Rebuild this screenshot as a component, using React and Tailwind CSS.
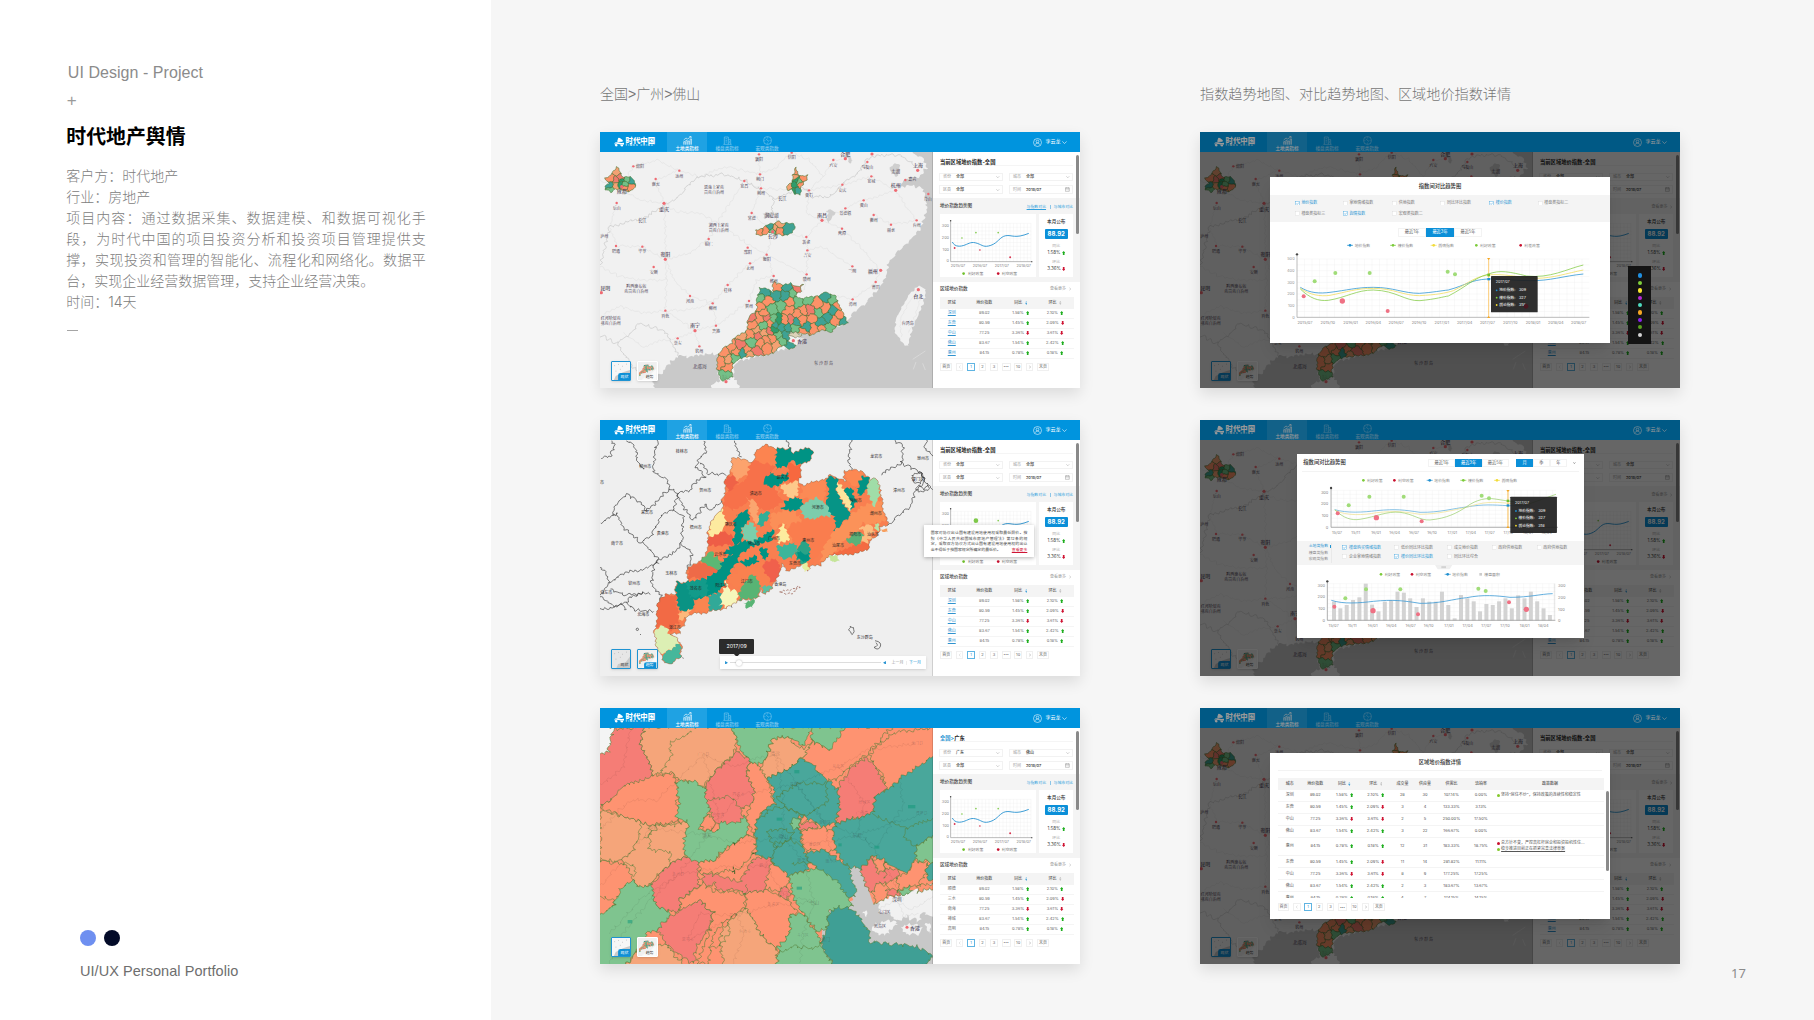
import React from "react";

/* ---------- geometry helpers ---------- */

const warp = ([x, y], a) => [
  x + a * (Math.sin(y * 0.42 + x * 0.11) + 0.7 * Math.sin(y * 0.19 - x * 0.31 + 1.3)),
  y + a * (Math.sin(x * 0.39 - y * 0.13 + 0.6) + 0.7 * Math.sin(x * 0.17 + y * 0.29)),
];

const parse = (s) => s.trim().split(/\s+/).map((p) => p.split(",").map(Number));

function rough(points, a = 2, closed = true) {
  const out = [];
  const n = points.length;
  for (let i = 0; i < (closed ? n : n - 1); i++) {
    const p = points[i];
    const q = points[(i + 1) % n];
    const k = Math.max(1, Math.round(Math.hypot(q[0] - p[0], q[1] - p[1]) / 4));
    for (let j = 0; j < k; j++) {
      out.push(warp([p[0] + ((q[0] - p[0]) * j) / k, p[1] + ((q[1] - p[1]) * j) / k], a));
    }
  }
  if (!closed) out.push(warp(points[n - 1], a));
  return "M" + out.map((p) => p[0].toFixed(1) + " " + p[1].toFixed(1)).join("L") + (closed ? "Z" : "");
}

function cell(seeds, i, box) {
  let poly = [[box[0], box[1]], [box[2], box[1]], [box[2], box[3]], [box[0], box[3]]];
  const a = seeds[i];
  seeds.forEach((b, j) => {
    if (j === i || !poly.length) return;
    const mx = (a[0] + b[0]) / 2;
    const my = (a[1] + b[1]) / 2;
    const d = (p) => (p[0] - mx) * (b[0] - a[0]) + (p[1] - my) * (b[1] - a[1]);
    const next = [];
    poly.forEach((p, k) => {
      const q = poly[(k + 1) % poly.length];
      const dp = d(p);
      const dq = d(q);
      if (dp <= 0) next.push(p);
      if (dp < 0 !== dq < 0) {
        const t = dp / (dp - dq);
        next.push([p[0] + (q[0] - p[0]) * t, p[1] + (q[1] - p[1]) * t]);
      }
    });
    poly = next;
  });
  return poly;
}

const TONE = { o: "#fc9168", l: "#f3a173", r: "#f07a6c", g: "#74c088", t: "#3fa294", d: "#2f9c6c" };

function Cells({ id, outline, seeds, amp = 2 }) {
  const pts = parse(outline);
  const xs = pts.map((p) => p[0]);
  const ys = pts.map((p) => p[1]);
  const box = [Math.min(...xs) - 8, Math.min(...ys) - 8, Math.max(...xs) + 8, Math.max(...ys) + 8];
  const list = seeds.trim().split(/\s+/).map((s) => {
    const [x, y, c] = s.split(",");
    return [Number(x), Number(y), c];
  });
  const edge = rough(pts, amp);
  return (
    <g>
      <clipPath id={id}>
        <path d={edge} />
      </clipPath>
      <g clipPath={`url(#${id})`} stroke="#3d6b2a" strokeWidth="1.5">
        {list.map((s, i) => (
          <path key={i} d={rough(cell(list, i, box), amp)} fill={TONE[s[2]]} />
        ))}
      </g>
      <path d={edge} fill="none" stroke="#4a7434" strokeWidth="1.7" />
    </g>
  );
}

/* ---------- maps ---------- */

const GD_OUTLINE =
  "550,606 575,615 600,608 620,620 638,615 630,635 612,650 640,655 690,645 700,637 735,645 755,690 772,730 740,735 725,755 690,750 665,765 640,760 620,758 600,755 595,785 620,795 600,808 575,795 550,820 500,828 470,830 445,840 430,850 425,870 430,890 395,902 388,880 380,865 385,820 400,805 425,790 435,770 470,755 475,715 500,690 500,660 510,625 535,625 548,640";
const GD_SEEDS =
  "522,636,t 512,656,g 562,620,o 560,645,t 590,622,t 608,640,g 624,624,r 585,645,t 532,665,o 512,680,o 545,688,g 575,680,g 600,665,o 596,692,o 625,665,g 655,660,g 640,690,o 622,705,o 660,690,r 682,670,o 686,700,g 708,650,t 708,685,o 730,660,g 728,690,t 745,675,o 748,705,o 762,726,t 735,722,o 718,745,g 712,712,t 695,745,o 692,728,t 668,715,o 672,745,o 650,740,t 635,720,o 640,758,o 618,725,t 604,718,r 612,745,g 595,745,t 584,720,o 572,740,t 566,722,d 556,735,t 548,718,g 540,730,o 530,715,r 520,738,g 522,700,o 508,715,o 485,712,r 490,738,o 500,750,l 480,762,o 455,765,l 505,768,r 525,758,l 540,755,r 552,750,d 565,765,g 545,775,o 575,780,g 590,765,t 605,798,t 560,795,l 530,800,o 530,780,o 512,790,o 498,812,r 485,788,g 470,808,o 480,825,l 450,795,r 457,820,t 440,815,o 435,835,g 425,800,o 400,815,o 395,845,o 415,840,l 415,860,o 410,888,g";

const CITIES =
  "绵阳,130,259,150,260 南充,197,297,197,314 达州,268,272,268,289 襄阳,507,223,507,240 信阳,605,218,605,234 六安,730,240,730,256 马鞍山,832,246,832,262 宜城,844,289,844,306 宜昌,463,303,463,320 荆门,510,283,510,299 荆州,513,325,513,341 黄石,657,331,657,348 安庆,757,314,757,331 嘉兴,946,300,967,300 舟山,1015,342,1013,358 乐山,80,369,80,385 常德,485,399,485,416 景德镇,766,385,766,402 衢州,851,405,851,422 台州,980,421,980,437 丽水,903,434,903,451 黄山,821,361,821,377 鹰潭,756,446,756,462 新余,649,471,649,487 吉安,652,511,652,527 铜仁,356,477,356,493 邵阳,473,503,473,519 衡阳,530,524,530,540 昭通,78,498,78,515 毕节,157,500,157,516 安顺,191,561,191,577 永州,480,550,480,566 三明,787,559,787,575 莆田,857,606,857,623 漳州,788,658,788,674 桂林,413,615,413,631 郴州,551,588,551,604 赣州,650,583,650,599 贺州,477,663,477,680 河池,300,648,300,665 柳州,368,670,368,687 百色,226,692,226,709 贵港,378,737,378,754 崇左,263,775,263,792 钦州,328,799,328,816";
const BIG =
  "重庆,222,370,222,389 长沙,548,455,548,468 南昌,696,421,696,407 福州,872,571,848,573 贵阳,226,538,226,523 南宁,315,752,315,737 上海,983,271,984,257 杭州,917,331,917,315 合肥,766,236,766,224 香港,610,782,636,785 台北,985,629,985,648 成都,95,320,95,333 昆明,34,638,46,624";

const cityList = (s) => s.split(" ").map((c) => c.split(","));

function ChinaMap() {
  return (
    <svg viewBox="30 216 999 708" className="block h-full w-full" fontFamily="'Noto Serif CJK SC','Noto Sans CJK SC',serif">
      <rect x="30" y="216" width="999" height="708" fill="#f1f1f1" />
      <g fill="none" stroke="#dfdfdf" strokeWidth="1.6">
        {[
          "30,300 90,325 150,360 222,370 260,395 330,400 400,440 470,490 530,524 600,560 650,583",
          "95,320 130,259 200,240 268,272 330,290 410,260 510,283 513,325 485,399 548,455",
          "222,370 197,297 268,272",
          "222,370 226,440 226,538 157,500 78,498 60,440 80,369",
          "226,538 300,520 356,477 400,400 463,303 513,325 600,330 657,331 757,314 844,289 917,331",
          "226,538 230,600 226,692 315,752 328,799 340,825",
          "226,538 260,610 300,648 368,670 413,615 480,550 530,524 548,455",
          "315,752 378,737 430,700 477,663 500,600 551,588 530,524",
          "696,421 649,471 652,511 650,583 640,640",
          "696,421 766,385 821,361 917,331 980,421 903,434 851,405",
          "696,421 756,446 810,500 872,571 857,606 788,658 700,640",
          "787,559 740,530 700,500 652,511",
          "766,236 730,240 700,290 657,331 650,400 696,421",
          "40,700 90,680 160,700 226,692 290,690 368,670 378,737",
          "30,560 90,590 150,600 230,600",
          "100,760 160,800 220,780 263,775 315,752",
          "548,455 590,460 649,471",
          "507,223 510,283 560,260 605,216 660,240 700,290",
        ].map((p) => (
          <path key={p} d={rough(parse(p), 2.5, false)} />
        ))}
      </g>
      <g fill="none" stroke="#cbcbcb" strokeWidth="2.2">
        <path d={rough(parse("30,560 45,500 60,440 110,425 160,415 222,375 270,345 320,290 400,283 463,300 513,330 550,355 600,340 640,320 665,350 720,350 760,310 800,285 832,240 870,225 930,225 985,262"), 3, false)} />
        <path d={rough(parse("550,355 545,400 570,430"), 3, false)} />
        <path d={rough(parse("30,765 80,790 110,770 150,730 200,745 230,760 265,825"), 3, false)} />
        <path d={rough(parse("80,790 120,850 150,880 210,923"), 3, false)} />
      </g>
      <g fill="#cfcfcf">
        <path d={rough(parse("905,255 925,250 930,275 915,290 902,275"), 3)} />
        <path d={rough(parse("710,388 735,395 725,415 715,430"), 3)} />
        <path d={rough(parse("520,400 550,396 545,412 525,414"), 2)} />
        <path d={rough(parse("768,222 790,240 778,250"), 2)} />
      </g>
      <path
        d={rough(parse("1050,200 955,210 1000,238 1010,262 990,290 950,296 925,322 960,316 1000,325 1006,350 1012,385 1000,420 990,452 962,478 932,508 915,525 895,545 890,585 872,620 850,645 828,668 800,690 775,718 740,740 640,760 620,795 560,815 500,830 445,842 432,860 430,890 440,905 448,935 360,935 370,908 388,902 384,860 390,824 350,820 305,832 265,826 240,850 212,880 188,905 196,935 1050,935"), 3)}
        fill="#c9c9c9"
      />
      <path d={rough(parse("368,912 400,904 435,905 450,918 450,940 355,940"), 2)} fill="#f1f1f1" />
      <path d={rough(parse("985,616 1008,628 1003,660 986,702 966,748 953,800 935,785 915,755 917,720 935,682 960,640"), 2)} fill="#f1f1f1" />
      <g fill="none" stroke="#dedede" strokeWidth="1.5">
        <path d={rough(parse("985,630 955,670 930,720 935,770"), 2, false)} />
        <path d={rough(parse("990,660 975,710 955,760"), 2, false)} />
      </g>
      <g stroke="#e5e5e5" strokeWidth="1.6">
        <path d="M968 838L1006 813M970 868L978 846M998 850L1006 870" />
      </g>
      <Cells id="gd" outline={GD_OUTLINE} seeds={GD_SEEDS} />
      <path d={rough(parse("592,762 612,756 634,764 625,772 604,770"), 2)} fill="#dcd3b8" stroke="#4a5a34" strokeWidth="1.4" />
      <path d={rough(parse("598,776 622,772 640,776 622,786 600,786"), 2)} fill="#f1f1f1" />
      <Cells
        id="cd"
        outline="80,260 90,275 95,290 120,290 135,302 137,322 118,335 98,330 75,326 62,337 48,328 45,318 60,310 45,296 62,286"
        seeds="80,275,l 62,296,o 80,300,r 96,300,d 110,298,g 126,303,t 122,322,o 104,312,g 92,312,d 76,316,l 60,318,t 60,330,g 104,326,o 92,292,r"
        amp={1.6}
      />
      <Cells
        id="wh"
        outline="618,262 626,282 640,290 655,286 645,305 635,318 630,345 610,340 605,328 590,330 594,312 606,308 608,288"
        seeds="618,276,o 640,296,o 618,300,d 628,306,g 600,320,l 614,316,d 622,334,t 610,330,d 612,292,l 632,312,o"
        amp={1.6}
      />
      <Cells
        id="cs"
        outline="497,450 520,446 532,432 556,432 562,422 578,430 612,430 614,448 600,462 575,466 558,462 540,458 520,466 500,464"
        seeds="508,456,o 527,454,o 542,440,t 548,452,g 568,434,l 566,452,o 592,448,t 555,444,l"
        amp={1.6}
      />
      <g fill="#ef6a72">
        {cityList(CITIES).map((c) => (
          <circle key={c[0]} cx={c[1]} cy={c[2]} r="3.6" />
        ))}
        {cityList(BIG).map((c) => (
          <circle key={c[0]} cx={c[1]} cy={c[2]} r="4.8" />
        ))}
        <circle cx="846" cy="222" r="4.8" />
        <circle cx="408" cy="905" r="4.8" />
      </g>
      <g fill="#4b4152" textAnchor="middle" fontSize="12" fontWeight="500">
        {cityList(CITIES).map((c) => (
          <text key={c[0]} x={c[3]} y={Number(c[4]) + 4}>{c[0]}</text>
        ))}
        <text x="372" y="326">恩施土家族</text>
        <text x="372" y="341">苗族自治州</text>
        <text x="386" y="442">湘西土家族</text>
        <text x="386" y="457">苗族自治州</text>
        <text x="139" y="625">黔西南布依</text>
        <text x="139" y="640">族苗族自治州</text>
        <text x="62" y="721">红河哈尼族</text>
        <text x="62" y="736">彝族自治州</text>
        <text x="43" y="473">泸州</text>
        <text x="157" y="426" fontSize="13">长江</text>
        <text x="577" y="361" fontSize="13">长江</text>
        <text x="545" y="411" fontSize="14">洞庭湖</text>
        <text x="917" y="280" fontSize="13">太湖</text>
        <text x="953" y="734">台湾岛</text>
        <text x="329" y="864" fontSize="14">北部湾</text>
        <text x="702" y="855" fontSize="12" letterSpacing="3">东沙群岛</text>
        <text x="408" y="896" fontSize="13" fill="#6a9a70">海口</text>
      </g>
      <g fill="#4b3f55" textAnchor="middle" fontSize="15" fontWeight="600">
        {cityList(BIG).map((c) => (
          <text key={c[0]} x={c[3]} y={Number(c[4]) + 5}>{c[0]}</text>
        ))}
      </g>
      <rect x="1026" y="216" width="3" height="708" fill="#00000022" />
    </svg>
  );
}

const GUANGDONG =
  "425,143 468,148 480,158 492,152 495,125 525,103 552,115 565,115 600,115 605,128 655,113 668,130 660,155 628,165 635,190 625,215 640,228 665,215 710,207 722,195 745,205 772,215 762,200 762,182 790,180 820,185 825,195 838,207 860,207 872,240 875,265 880,300 895,345 870,352 860,380 838,395 835,420 800,430 770,435 740,432 715,440 690,465 660,470 655,485 640,465 620,470 590,483 578,460 570,485 560,510 545,530 548,540 520,555 510,540 508,560 480,568 445,572 430,580 410,595 370,602 350,610 310,610 285,625 285,645 262,655 270,670 240,672 262,685 275,705 272,740 245,762 215,755 218,735 200,710 192,670 200,640 202,580 225,555 255,550 258,515 290,518 295,505 288,480 310,465 335,450 350,425 355,400 352,370 365,330 398,297 395,270 405,250 405,210 425,180";

const DISTRICTS = [
  ["#f98b5a", "405,250 460,220 520,160 556,170 540,210 570,240 560,300 520,300 480,270 440,300 395,290"],
  ["#f7714a", "480,158 495,150 556,165 540,205 560,240 580,270 555,300 510,300 490,270 430,300 400,290 405,245 470,205"],
  ["#fc8450", "492,152 495,125 525,103 558,115 556,165 520,160"],
  ["#f7683f", "595,160 628,165 635,190 625,215 600,212 592,190"],
  ["#fb8f58", "540,310 600,300 632,320 640,360 600,400 590,345 570,340 545,365"],
  ["#fa7d4e", "600,340 660,325 730,320 735,365 700,420 660,465 650,410 610,400 595,370"],
  ["#fb8a55", "665,215 710,207 705,250 700,280 625,262 640,228"],
  ["#fb9259", "735,362 780,320 830,280 875,270 885,330 850,345 815,340 800,370 770,385 720,440 690,460 700,415"],
  ["#f46b42", "770,415 800,402 838,395 835,420 800,430 770,435 725,435"],
  ["#fc8852", "762,182 820,185 818,205 795,232 772,215"],
  ["#f9814f", "415,510 450,475 500,470 520,455 545,500 560,510 520,530 490,490 460,515 440,545"],
  ["#009384", "560,115 600,115 605,128 655,113 668,130 660,155 628,165 600,150 590,172 562,175 556,150"],
  ["#009384", "520,212 545,182 560,200 595,190 592,212 560,230 535,228"],
  ["#009384", "590,270 625,262 640,285 632,302 575,298"],
  ["#069486", "710,200 743,205 740,250 758,280 782,318 755,340 735,362 735,320 705,300 715,250"],
  ["#009384", "820,195 838,207 828,245 805,262 800,235"],
  ["#009384", "768,236 792,235 790,262 800,275 785,302 765,268"],
  ["#009384", "445,310 475,298 478,330 455,355 455,400 425,410 435,370 430,338"],
  ["#009384", "405,440 440,428 450,445 425,480 405,520 380,550 330,560 345,510 378,485"],
  ["#009384", "400,430 430,402 478,392 545,372 552,390 520,398 480,412 440,440"],
  ["#0a9384", "258,515 290,518 345,505 360,540 345,560 312,572 305,600 272,602 258,560"],
  ["#139b8a", "290,518 345,505 360,540 345,560 300,560"],
  ["#009384", "510,412 530,412 540,438 520,452"],
  ["#009384", "522,370 550,362 545,395 526,398"],
  ["#009384", "445,455 500,435 505,460 470,470"],
  ["#2aa387", "618,425 640,390 655,400 662,440 645,462 620,448"],
  ["#009384", "625,425 660,432 650,455 622,448"],
  ["#31ae97", "510,310 535,305 536,330 512,352 500,335"],
  ["#31a998", "357,560 395,548 395,600 357,602"],
  ["#5cb874", "330,450 358,425 395,452 392,475 355,480"],
  ["#58b474", "450,545 470,510 490,490 512,520 505,560 445,572"],
  ["#5bb279", "768,390 800,365 822,375 810,405 780,402"],
  ["#7ccdac", "635,285 680,262 715,285 722,318 650,328 632,310"],
  ["#7bceab", "455,352 485,335 505,370 490,402 462,382"],
  ["#3db59a", "557,408 610,400 625,425 600,447 570,442"],
  ["#46b79b", "215,740 250,715 270,700 272,740 245,762 215,755"],
  ["#5abf9f", "512,532 545,528 548,540 520,555"],
  ["#a0dda8", "838,207 860,207 872,250 855,287 832,250"],
  ["#dcefb4", "192,670 215,645 232,645 238,672 262,685 265,705 220,735 200,710"],
  ["#f6f6bb", "395,548 410,515 422,540 440,545 443,572 408,595 390,582"],
  ["#fdea9f", "365,330 398,297 408,340 382,385 355,378"],
  ["#fde49c", "740,215 755,222 778,270 785,302 765,290 745,250"],
  ["#fdeb9e", "575,342 590,352 597,390 565,402 560,378"],
  ["#fdc98b", "568,225 625,212 625,255 600,266 580,240"],
  ["#fca36d", "425,143 468,148 480,158 472,195 445,212 425,185"],
  ["#fba56f", "472,262 500,280 507,330 492,345 480,300"],
  ["#fdb87b", "265,605 305,598 285,625 270,638"],
  ["#fcbd80", "810,350 845,345 850,365 830,400 812,395 825,365"],
  ["#ee5d46", "352,385 400,365 430,378 425,405 358,408"],
  ["#f0604c", "522,458 556,445 572,480 552,520 522,490"],
  ["#f26a45", "200,580 225,555 258,555 265,605 265,640 240,662 215,645 200,655"],
  ["#ef6247", "405,210 425,195 446,215 415,248"],
  ["#ee6a48", "292,478 330,455 385,482 345,508 297,503"],
  ["#fa8550", "315,575 350,555 358,602 315,608"],
];

const GD_LABELS =
  "桂林市,275,126 柳州市,166,169 贺州市,346,241 来宾市,171,307 梧州市,317,352 贵港市,218,372 南宁市,81,400 玉林市,244,492 钦州市,133,522 崇左市,49,548 北海市,160,613 韶关市,578,203 清远市,497,251 肇庆市,422,343 广州市,552,387 佛山市,493,401 云浮市,391,434 河源市,683,293 梅州市,797,271 潮州市,857,312 揭阳市,796,373 汕头市,849,373 汕尾市,744,408 惠州市,655,391 东莞市,615,462 江门市,470,514 茂名市,317,535 阳江市,394,528 湛江市,254,654 龙岩市,859,141 泉州市,999,147 厦门市,984,209 漳州市,927,243 香港岛,571,524 东沙群岛,824,683";

function GuangdongMap() {
  const edge = rough(parse(GUANGDONG), 2.4);
  return (
    <svg viewBox="30 90 999 708" className="block h-full w-full" fontFamily="'Noto Sans CJK SC',sans-serif">
      <rect x="30" y="90" width="999" height="708" fill="#efefef" />
      <g fill="none" stroke="#3a3a3a" strokeWidth="2">
        {[
          "30,145 60,140 75,105 65,90",
          "110,90 135,110 142,150 165,180",
          "205,85 195,120 190,185 225,205 240,235 265,250 300,240 320,215 345,200 318,170 330,140 350,125 340,90",
          "240,235 200,275 170,300 140,270 110,255 75,285 68,320 30,340",
          "68,320 80,310 100,350 125,375 165,405 205,445 190,475 185,520 215,560 205,590",
          "265,250 250,300 280,320 275,400 255,425 200,455",
          "250,300 215,315 185,375 155,395",
          "265,250 280,295 310,330 345,285 365,300 395,270",
          "275,400 305,430 300,465 290,480",
          "30,470 50,490 60,515 30,560 75,590 110,580 135,600 195,605",
          "60,515 100,490 150,480 205,460",
          "60,540 110,555 185,548",
          "110,580 120,560 160,550",
          "330,155 355,190 405,195",
          "435,90 450,140",
          "590,90 600,115",
          "785,90 775,150 790,180",
          "905,85 940,110 935,160 870,195",
          "935,160 985,185 1005,210 975,250 960,290 930,315 895,345",
          "985,185 1029,240",
          "1010,90 1005,115 1029,135",
          "30,600 60,595 90,580 110,600",
        ].map((p) => (
          <path key={p} d={rough(parse(p), 3, false)} />
        ))}
        <path d={rough(parse("966,195 990,185 1005,200 990,222 970,215"), 2)} />
        <path d={rough(parse("975,240 985,225 1000,238 1015,225 1015,240 990,245"), 2)} />
        <path d={rough(parse("780,648 792,655 788,672 778,665"), 1.5)} />
        <path d="M855 692Q878 696 870 712Q862 722 852 712Q868 708 858 698" />
        <circle cx="142" cy="658" r="3.5" />
        <path d="M150 672l3 3M422 585l4 8M278 742l2 4" />
      </g>
      <clipPath id="gdp">
        <path d={edge} />
      </clipPath>
      <path d={edge} fill="#f97f50" />
      <g clipPath="url(#gdp)">
        {DISTRICTS.map(([c, p], i) => (
          <path key={i} d={rough(parse(p), 3.4)} fill={c} />
        ))}
      </g>
      <path d={edge} fill="none" stroke="#6b5b3a" strokeWidth="1" />
      <path d={rough(parse("715,440 742,435 748,452 725,458"), 2)} fill="#c5e59a" />
      <path d={rough(parse("635,462 650,460 658,480 645,486"), 2)} fill="#e7efa0" />
      <path d={rough(parse("855,342 868,340 865,362 855,360"), 2)} fill="#b9e3a5" />
      <path d={rough(parse("873,358 892,356 892,366 878,366"), 1)} fill="#f7a060" />
      <path d={rough(parse("462,578 480,570 492,572 490,590 470,592"), 3)} fill="#58b474" />
      <path d={rough(parse("568,545 600,540 625,528 630,532 605,552 575,548"), 2)} fill="none" stroke="#8d4b3c" strokeWidth="2" strokeDasharray="7 5" />
      <g fill="#26221f" textAnchor="middle" fontSize="12">
        <text x="36" y="222">市</text>
        {cityList(GD_LABELS).map((c) => (
          <text key={c[0]} x={c[1]} y={Number(c[2]) + 4}>{c[0]}</text>
        ))}
      </g>
      <rect x="1026" y="90" width="3" height="708" fill="#00000022" />
    </svg>
  );
}

const R = "#f57d76";
const O = "#fe9371";
const L = "#f5a57a";
const G = "#7fc48f";
const T = "#49a79b";

const FOSHAN = [
  [L, "30,330 110,352 180,375 240,372 295,365 290,410 285,470 240,490 180,550 145,565 130,530 100,485 30,480"],
  [L, "165,80 430,80 440,140 425,170 375,215 340,262 320,250 265,240 250,220 190,222 150,130"],
  [R, "60,88 165,80 150,130 190,222 188,245 100,262 92,288 60,300 30,322 20,320 20,160 55,150"],
  ["#f4f4f4", "20,80 72,80 60,130 55,155 20,162"],
  [O, "100,260 185,228 250,222 262,245 270,265 258,310 270,365 180,375 110,352 30,325 60,300"],
  [G, "258,245 320,245 345,270 360,325 350,350 330,390 385,392 390,365 470,350 475,405 420,435 370,480 330,490 295,485 280,430 295,365 258,355 268,310"],
  [O, "350,345 378,355 368,390 345,390 332,372"],
  [R, "440,150 480,185 470,225 492,270 490,310 455,330 460,355 440,370 375,365 350,310 345,260 375,215 420,180"],
  [G, "425,80 665,80 640,140 600,110 550,115 520,190 480,190 440,130"],
  [L, "550,115 600,110 620,140 645,145 665,125 660,155 630,175 600,205 530,235 505,220 525,180"],
  [O, "480,190 500,190 540,260 555,310 510,345 495,380 500,415 485,400 470,345 490,300 492,270 470,225"],
  [G, "665,80 765,80 760,140 720,150 665,125"],
  [O, "765,80 905,80 830,165 790,190 740,240 700,240 640,175 665,125 720,150"],
  [O, "840,160 905,100 1040,80 1040,180 990,215 930,235 905,275 885,270 880,225 850,190"],
  [R, "825,172 850,190 888,265 885,280 855,285 850,345 790,355 740,370 745,260 780,210"],
  [T, "530,235 600,205 630,175 670,195 710,240 745,270 748,330 735,370 700,385 680,368 640,350 615,380 630,395 640,455 660,490 650,510 600,530 565,515 550,480 500,465 495,420 500,360 540,315 555,310 550,270"],
  [T, "890,275 930,235 1040,165 1040,405 980,440 975,500 950,520 900,495 850,465 815,505 770,500 735,450 725,400 740,370 800,355 850,340 855,285"],
  [T, "560,295 620,250 705,250 715,300 690,325 640,345 600,330"],
  [O, "628,392 700,380 730,400 735,450 700,455 645,445"],
  [R, "628,370 682,368 675,386 630,388"],
  [G, "605,360 625,350 630,388 605,385"],
  [O, "625,348 645,350 648,366 630,366"],
  ["#46a598", "535,395 580,385 610,400 595,420 560,445 540,425"],
  [T, "645,460 700,448 770,495 795,560 795,590 760,585 700,540 680,500 655,485"],
  [R, "240,490 285,470 325,490 325,560 270,600 270,630 235,635 200,620 178,560"],
  [O, "330,490 370,480 470,405 500,415 485,470 450,500 430,510 370,520 330,520"],
  [R, "490,480 545,470 550,510 525,570 470,580 440,570 380,570 372,545 358,560 340,550 340,520 375,525 450,545 475,505"],
  [O, "545,485 598,530 595,560 570,575 530,565 525,560"],
  [R, "568,570 595,560 598,590 575,600"],
  [O, "270,600 340,552 372,575 440,575 465,585 465,620 400,670 370,700 355,792 320,792 360,690 370,640 330,603 272,640"],
  [O, "465,580 530,570 595,600 628,640 600,645 600,700 560,750 500,690 470,625"],
  [G, "600,530 680,500 740,545 785,605 785,620 715,635 710,690 680,690 640,640 610,600"],
  [G, "600,642 640,645 680,695 690,735 730,800 560,800 565,740 600,700"],
  ["#3f9f95", "715,640 750,620 790,630 835,690 840,725 985,740 1029,770 1000,800 730,800 690,730 710,690"],
  [L, "400,680 470,622 500,690 560,750 560,800 400,800 390,720"],
  [G, "130,535 145,562 180,552 200,620 240,635 240,660 200,690 170,700 150,740 105,800 20,800 20,648 70,620 90,570"],
  [R, "200,690 250,640 330,603 370,640 355,690 320,740 310,792 270,770 230,730"],
  [L, "105,800 150,745 230,735 285,800"],
  [R, "812,505 850,470 860,510 925,505 925,535 870,550 850,580 825,560"],
  [O, "845,475 885,480 885,510 862,522"],
  [O, "860,550 895,555 905,580 855,612 848,582"],
  [R, "890,572 925,568 925,585 900,592"],
  [O, "915,540 955,520 970,485 1010,485 1010,520 985,555 930,565"],
  [G, "980,440 1040,405 1040,495 1005,480 985,485 975,480"],
  [G, "920,575 960,558 962,575 935,582"],
  [T, "1012,492 1040,490 1040,548 1010,535"],
  [O, "985,560 1040,548 1040,565 985,575"],
];

const FOSHAN_LABELS =
  "广宁县,340,165 清远,555,162 四会市,445,285 高要区,385,348 肇庆,351,406 云安区,185,384 花都区,617,254 从化区,745,199 增城区,823,308 龙门县,981,130 博罗县,995,342 黄埔区,705,368 佛山,580,410 番禺区,674,433 顺德区,640,482 南沙区,724,484 东莞,801,406 新兴县,264,524 鹤山市,525,498 江门,578,580 新会区,550,615 中山,673,607 开平市,436,647 恩平市,293,720 台山市,465,694 斗门区,638,706 澳门,706,720 广州湾,815,342";

function FoshanMap() {
  return (
    <svg viewBox="30 84 999 708" className="block h-full w-full" fontFamily="'Noto Serif CJK SC','Noto Sans CJK SC',serif">
      <rect x="30" y="84" width="999" height="708" fill={O} />
      <path d="M740 500H812L850 612L915 590L1029 550V792H690L700 640L790 600Z" fill="#c8c8c8" />
      <g fill="#f1f1f1">
        <path d={rough(parse("862,612 905,592 960,575 1035,560 1035,650 1000,640 985,665 950,650 925,665 905,640 870,635"), 4)} />
        <path d={rough(parse("845,690 860,668 915,662 920,672 890,700 860,705"), 4)} />
        <path d={rough(parse("935,682 965,670 998,685 985,705 950,702"), 3)} />
        <path d={rough(parse("815,640 830,632 832,648"), 2)} />
        <path d={rough(parse("1005,670 1020,668 1022,700 1012,695"), 2)} />
      </g>
      <g stroke="#57803a" strokeWidth="1.7" strokeLinejoin="round">
        {FOSHAN.map(([c, p], i) => (
          <path key={i} d={rough(parse(p), 3.8)} fill={c} />
        ))}
      </g>
      <g fill="none" stroke="#57803a" strokeWidth="1.6">
        {[
          "165,420 205,375 260,375",
          "180,375 178,450 240,455 240,490",
          "150,360 150,400 130,450 100,480",
          "30,480 80,490 130,495 135,530",
          "310,95 240,130 245,170 210,220",
          "460,330 420,290 350,300",
          "500,360 560,320 610,330 640,345",
          "550,430 600,420 640,440",
          "560,430 545,480",
          "850,345 900,365 950,385 1029,355",
          "950,385 940,410 980,440",
          "600,490 660,490",
          "560,755 610,740 680,745 700,715",
          "885,480 885,540",
          "410,670 420,700 385,740 360,740",
          "30,590 75,600 70,625",
          "465,585 470,555",
        ].map((p) => (
          <path key={p} d={rough(parse(p), 3.8, false)} />
        ))}
      </g>
      <g fill="none" stroke="#000" strokeOpacity="0.07" strokeWidth="2.4">
        {[
          "30,390 120,300 200,300 340,165 430,200 555,160 620,254 745,199 830,150 981,130",
          "30,560 185,384 351,406 445,285 617,254 705,368 801,406 995,342",
          "351,406 440,430 580,410 674,433 801,406 823,308 745,199",
          "580,410 640,482 673,607 640,700 630,790",
          "60,700 150,600 264,524 400,500 525,498 578,580 673,607",
          "293,720 436,647 550,615 673,607",
          "30,260 100,200 120,90",
          "60,790 100,700 180,600 264,524 351,406",
          "820,410 870,470 900,520 940,600",
          "555,160 580,290 580,410 525,498",
          "340,165 360,240 385,348 351,406",
          "436,647 465,694 430,790",
          "293,720 330,640 436,647",
          "617,254 680,330 705,368 724,484",
          "930,250 940,320 860,440 801,406",
        ].map((p) => (
          <path key={p} d={rough(parse(p), 3.5, false)} />
        ))}
      </g>
      <g fill="#159a7c" opacity="0.55">
        <rect x="613" y="210" width="15" height="10" />
        <rect x="560" y="353" width="17" height="9" />
        <rect x="954" y="315" width="22" height="10" />
        <rect x="853" y="437" width="15" height="9" />
        <rect x="113" y="660" width="14" height="10" />
        <rect x="620" y="560" width="16" height="9" />
        <rect x="745" y="430" width="10" height="9" />
      </g>
      <path d="M428 428q8 0 6 8M426 516l8-4v10M430 500v8M486 462l12-4" fill="none" stroke="#2c5a20" strokeWidth="2.5" />
      <g fill="#3d2a33" fillOpacity="0.33" textAnchor="middle" fontSize="12">
        {cityList(FOSHAN_LABELS).map((c) => (
          <text key={c[0]} x={c[1]} y={Number(c[2]) + 4} fontSize={c[0].length === 2 ? 15 : 12}>{c[0]}</text>
        ))}
      </g>
      <g fill="none" stroke="#dadada" strokeWidth="1.5">
        <path d={rough(parse("870,625 920,600 960,630 1029,590"), 3, false)} />
        <path d={rough(parse("920,600 940,650 985,640"), 3, false)} />
      </g>
      <g fill="#4b3f55" textAnchor="middle" fontSize="12" fontWeight="500">
        <text x="883" y="643">屯门区</text>
        <text x="870" y="685">离岛区</text>
        <text x="921" y="602" fontSize="14">深圳</text>
        <text x="974" y="690" fontSize="15" fontWeight="600">香港</text>
      </g>
      <circle cx="951" cy="682" r="4.6" fill="#ef6a72" />
      <rect x="1026" y="84" width="3" height="708" fill="#00000022" />
    </svg>
  );
}

/* ---------- shared screen chrome ---------- */

const TabIcon = {
  chart: (
    <svg viewBox="0 0 27 27" className="h-[9px] w-[9px] shrink-0" fill="none" stroke="#fff" strokeWidth="1.8">
      <path d="M2 26V17h4v9M8.500 26V13h4v13M15 26V15h4v11M21.500 26V9h4v17M2 12L9 6l5 3L24 2M19 1.500h5.500V7" />
    </svg>
  ),
  building: (
    <svg viewBox="0 0 27 27" className="h-[9px] w-[9px] shrink-0" fill="none" stroke="#fff" strokeWidth="1.800">
      <path d="M1 25h25M4 25V3h12v22M16 11h7v14M7.500 8h5M7.500 13h5M7.500 18h5M19.500 15v2M19.500 19v2" />
    </svg>
  ),
  clock: (
    <svg viewBox="0 0 27 27" className="h-[9px] w-[9px] shrink-0" fill="none" stroke="#fff" strokeWidth="1.800">
      <circle cx="13.500" cy="13.500" r="12" />
      <path d="M13.500 4v3M13.500 20v3M4 13.500h3M20 13.500h3M9 8l5 6 4 2" />
    </svg>
  ),
};

function Tab({ icon, label, active }) {
  return (
    <div className={active ? "flex h-full w-[40px] flex-col items-center bg-[#1fa2e3] pt-[4px]" : "flex h-full w-[40px] flex-col items-center pt-[4px] opacity-50"}>
      {TabIcon[icon]}
      <span className="mt-[1px] whitespace-nowrap text-[4.600px] font-medium leading-[5px] text-white">{label}</span>
    </div>
  );
}

function Chevron({ className }) {
  return (
    <svg viewBox="0 0 14 8" className={className} fill="none" stroke="currentColor" strokeWidth="1.700">
      <path d="M1 1l6 6 6-6" />
    </svg>
  );
}

function Header() {
  return (
    <header className="flex h-[20px] w-full shrink-0 items-center bg-[#0094de]">
      <div className="flex w-[67px] items-center pl-[13.500px]">
        <svg viewBox="0 0 32 30" className="h-[10px] w-[10.500px] shrink-0" fill="#fff">
          <path d="M9 13Q11 11 12 5Q13 0 18 3L26 9Q29 12 25 14L13 15Z" />
          <path d="M0 20Q3 15 12 16L22 18L32 17Q32 22 28 23L12 21Q6 19 0 20Z" />
          <path d="M2 22Q10 20 11 24Q11 29 6 29Q2 28 2 22Z" />
          <path d="M19 22L28 24Q28 29 24 29Q19 29 19 22Z" />
        </svg>
        <div className="ml-[1.500px] flex flex-col">
          <span className="whitespace-nowrap text-[7.400px] font-black leading-[7.500px] text-white">时代中国</span>
          <span className="mt-[0.500px] whitespace-nowrap text-[2.200px] font-bold leading-[2.600px] tracking-[1.250px] text-white">TIMES CHINA</span>
        </div>
      </div>
      <Tab icon="chart" label="土地类指标" active />
      <Tab icon="building" label="楼盘类指标" />
      <Tab icon="clock" label="宏观类指数" />
      <div className="ml-auto flex items-center gap-[3.500px] pr-[13px]">
        <svg viewBox="0 0 27 27" className="h-[9px] w-[9px]" fill="none" stroke="#fff" strokeWidth="1.700">
          <circle cx="13.500" cy="13.500" r="12" />
          <circle cx="13.500" cy="10.500" r="4" />
          <path d="M7 20q1-5 6.500-5t6.500 5" />
        </svg>
        <span className="flex items-center gap-[1.500px] whitespace-nowrap text-[5px] text-white">
          李云龙
          <Chevron className="h-[3px] w-[5px] text-white" />
        </span>
      </div>
    </header>
  );
}

function Thumbs({ trend }) {
  return (
    <div className="absolute bottom-[7px] left-[10.500px] flex gap-[6.500px]">
      <div className="relative h-[20.300px] w-[20.300px] overflow-hidden rounded-[1px] border border-[#1f93d2] bg-[#f4f4f4] shadow-sm">
        <svg viewBox="0 0 60 60" className="block h-full w-full">
          <rect width="60" height="60" fill={trend ? "#e6e6e6" : "#f6f6f6"} />
          <path d={trend ? "M60 20L45 40L20 46L14 60H60Z" : "M60 26L36 34L12 46L6 60H60Z"} fill="#c9c9c9" />
          <path d="M8 12h2M20 8h2M34 14h2M46 7h2M26 24h2M12 30h2" stroke="#8a8a8a" strokeWidth="2" />
          {!trend && <path d="M20 60V44q0-8 8-8h32v24z" fill="#0f90d6" />}
          <text x="41" y="53" fontSize="13" textAnchor="middle" fill={trend ? "#333" : "#fff"}>现状</text>
        </svg>
      </div>
      <div className={trend ? "relative h-[20.300px] w-[20.300px] overflow-hidden rounded-[1px] border border-[#1f93d2] bg-[#f4f4f4] shadow-sm" : "relative h-[20.300px] w-[20.300px] overflow-hidden rounded-[1px] border border-white bg-[#f4f4f4] shadow"}>
        <svg viewBox="0 0 60 60" className="block h-full w-full">
          <rect width="60" height="60" fill="#f0f0f0" />
          <path d="M60 22L40 42L14 56V60H60Z" fill="#fafafa" />
          <svg x="2" y="4" width="52" height="46" viewBox="375 600 400 310">
            <Cells id={trend ? "gt" : "gn"} outline={GD_OUTLINE} seeds={GD_SEEDS} />
          </svg>
          {trend && <path d="M20 60V46q0-6 8-6h32v20z" fill="#0f90d6" />}
          <text x="38" y="54" fontSize="13" textAnchor="middle" fill={trend ? "#fff" : "#333"}>趋势</text>
        </svg>
      </div>
    </div>
  );
}

function Arrow({ up }) {
  return (
    <svg viewBox="0 0 10 12" className="h-[4px] w-[3.400px] shrink-0" fill={up ? "#1fae1f" : "#cf1433"}>
      <path d={up ? "M5 0L10 6H7.500V12H2.500V6H0Z" : "M5 12L0 6H2.500V0H7.500V6H10Z"} />
    </svg>
  );
}

function Sort({ on }) {
  return (
    <svg viewBox="0 0 8 12" className="h-[3.800px] w-[2.600px] shrink-0">
      <path d="M4 0L7.500 5H.5Z" fill={on ? "#7fbfe6" : "#b5b5b5"} />
      <path d="M4 12L.5 7H7.500Z" fill={on ? "#0b86d0" : "#b5b5b5"} />
    </svg>
  );
}

function Select({ label, value, calendar }) {
  return (
    <div className="flex h-[8.700px] w-[64px] items-center border border-[#f2f2f2] px-[2.800px] text-[4px]">
      <span className="w-[12.800px] whitespace-nowrap text-[#999]">{label}</span>
      <span className="whitespace-nowrap font-medium text-[#333]">{value}</span>
      {calendar ? (
        <svg viewBox="0 0 14 14" className="ml-auto h-[4.600px] w-[4.600px]" fill="none" stroke="#888" strokeWidth="1.400">
          <path d="M1 2.500h12V13H1zM1 6h12M4 1v3M10 1v3" />
        </svg>
      ) : (
        <Chevron className="ml-auto h-[2px] w-[3.600px] text-[#999]" />
      )}
    </div>
  );
}

const F = "Inter,'Noto Sans CJK SC',sans-serif";

function range(a, b, step) {
  const out = [];
  for (let v = a; v <= b; v += step) out.push(v);
  return out;
}

function Grid({ x1, x2, y1, y2, sx, sy }) {
  return (
    <g stroke="#ececec" strokeWidth="1">
      {range(x1 + sx, x2, sx).map((x) => (
        <path key={"x" + x} d={`M${x} ${y1}V${y2}`} />
      ))}
      {range(y1, y2 - 1, sy).map((y) => (
        <path key={"y" + y} d={`M${x1} ${y}H${x2}`} />
      ))}
    </g>
  );
}

function MiniTrend({ bigDot, negative }) {
  return (
    <svg viewBox="60 282 289 189" className="block h-[63px] w-[96.300px] bg-white" fontFamily={F}>
      <Grid x1={92} x2={334} y1={310} y2={425} sx={10.5} sy={11.5} />
      <path d="M92 302V425H335" fill="none" stroke="#777" strokeWidth="1.500" />
      <circle cx="92" cy="302" r="2.200" fill="#444" />
      <circle cx="336" cy="425" r="2" fill="#444" />
      <g fill="#8a8a8a" fontSize="11.500" textAnchor="end">
        <text x="87" y="322">300</text>
        <text x="87" y="357">200</text>
        <text x="87" y="392">100</text>
        <text x="87" y="427">0</text>
      </g>
      <path d="M97 366C105 382 122 380 135 375S155 364 172 370S192 383 213 376S240 350 258 347S285 357 327 340" fill="none" stroke="#1f8fd0" strokeWidth="2.600" />
      <g fill="#7fc94a">
        <circle cx="126" cy="354" r="2.500" />
        <circle cx="168" cy="338" r={bigDot ? 7 : 2.5} />
        <circle cx="235" cy="338" r="2.500" />
      </g>
      <g fill="#d8344f">
        <circle cx="104" cy="384" r="2.800" />
        <circle cx="180" cy="390" r="2.500" />
        <circle cx="271" cy="412" r="3" />
      </g>
      <g fill="#888" fontSize="11.500" textAnchor="middle">
        <text x="114" y="441">2015/07</text>
        <text x="180" y="441">2016/07</text>
        <text x="246" y="441">2017/07</text>
        <text x="312" y="441">2018/07</text>
      </g>
      <circle cx="131" cy="461" r="4" fill="#6fc02a" />
      <circle cx="235" cy="461" r="4" fill="#c9102f" />
      <g fill="#777" fontSize="11.600">
        <text x="144" y="465">利好政策</text>
        <text x="246" y="465">{negative}</text>
      </g>
    </svg>
  );
}

function Pager({ wide }) {
  const box = "flex h-[8px] items-center justify-center border border-[#f0f0f0]";
  return (
    <div className={wide ? "flex gap-[3.700px] text-[4px] text-[#666]" : "flex gap-[3.900px] pl-[1.300px] text-[4px] text-[#666]"}>
      <span className={box + " w-[11.800px] whitespace-nowrap"}>首页</span>
      <span className={box + " w-[7.500px]"}>
        <Chevron className="h-[2px] w-[3.800px] shrink-0 rotate-90 text-[#bbb]" />
      </span>
      <span className="flex h-[8px] w-[7.500px] items-center justify-center border border-[#5fb4e2] text-[#1f93d2]">1</span>
      <span className={box + " w-[7.500px]"}>2</span>
      <span className={box + " w-[7.500px]"}>3</span>
      <span className={box + " w-[9px] text-[3px]"}>•••</span>
      <span className={box + " w-[7.500px]"}>10</span>
      <span className={box + " w-[7.500px]"}>
        <Chevron className="h-[2px] w-[3.800px] shrink-0 -rotate-90 text-[#777]" />
      </span>
      <span className={box + " w-[11.800px] whitespace-nowrap"}>末页</span>
    </div>
  );
}

const STATS = [
  ["89.02", "1.58%", 1, "2.10%", 1],
  ["80.59", "1.45%", 1, "2.09%", 0],
  ["77.25", "3.36%", 0, "3.61%", 0],
  ["83.67", "1.54%", 1, "2.42%", 1],
  ["84.15", "0.78%", 1, "0.18%", 1],
];

function Sidebar({ title, province = "全部", city = "全部", names, linked, more, underline, bigDot }) {
  const cols = "grid grid-cols-[24.500px_40.700px_32px_36.800px] items-center";
  return (
    <aside className="flex h-[236px] w-[147px] shrink-0 bg-white">
      <div className="flex w-[147px] shrink-0 flex-col">
        <div className="mx-[7px] flex h-[14.300px] items-center border-b border-[#f5f5f5] pt-[6px] text-[5.300px] font-bold leading-[8px] text-[#222]">{title}</div>
        <div className="flex flex-col gap-[3.900px] px-[6.300px] pt-[6.300px]">
          <div className="flex gap-[6px]">
            <Select label="省份" value={province} />
            <Select label="城市" value={city} />
          </div>
          <div className="flex gap-[6px]">
            <Select label="区县" value="全部" />
            <Select label="时间" value="2018/07" calendar />
          </div>
        </div>
        <section className="mt-[4.400px] h-[83.400px] bg-[#f4f4f4] px-[7px]">
          <div className="flex h-[15.700px] items-center justify-between pt-[1px]">
            <span className="text-[4.600px] font-medium text-[#444]">地价指数趋势图</span>
            {more ? (
              <span className="flex items-center gap-[1.500px] text-[4px] text-[#999]">
                查看更多
                <Chevron className="h-[2px] w-[4px] -rotate-90 text-[#999]" />
              </span>
            ) : (
              <span className="flex items-center gap-[3.500px] text-[3.900px] text-[#2f9fdc]">
                <span className={underline ? "underline" : ""}>与指数对比</span>
                <i className="h-[4px] w-[0.500px] bg-[#8cc6e8]" />
                <span>与城市对比</span>
              </span>
            )}
          </div>
          <div className="flex gap-[3.400px]">
            <MiniTrend bigDot={bigDot} negative={more ? "利差政策" : "利空政策"} />
            <div className="flex h-[63px] w-[33.600px] flex-col items-center bg-white pt-[4.700px]">
              <span className="text-[4.600px] font-medium leading-[6.500px] text-[#333]">本月公布</span>
              <span className="mt-[3.700px] flex h-[9.800px] w-[23px] items-center justify-center rounded-[1px] bg-[#0b8fd8] text-[6px] font-bold text-white">88.92</span>
              <span className="mt-[4.700px] text-[3.900px] leading-[6px] text-[#aaa]">同比</span>
              <span className="flex items-center gap-[1px] text-[4.500px] leading-[7px] text-[#444]">1.58% <Arrow up /></span>
              <span className="mt-[3px] text-[3.900px] leading-[6px] text-[#aaa]">环比</span>
              <span className="flex items-center gap-[1px] text-[4.500px] leading-[7px] text-[#444]">3.36% <Arrow /></span>
            </div>
          </div>
        </section>
        <section className="px-[6.500px] text-[4px]">
          <div className="flex h-[15.300px] items-center justify-between pl-[0.500px]">
            <span className="text-[4.600px] font-medium text-[#444]">区域地价指数</span>
            <span className="flex items-center gap-[1.500px] pr-[2px] text-[4px] text-[#999]">
              查看更多
              <Chevron className="h-[2px] w-[4px] -rotate-90 text-[#999]" />
            </span>
          </div>
          <div className={cols + " h-[12px] bg-[#f4f4f4] text-center font-medium text-[#555]"}>
            <span>区域</span>
            <span>地价指数</span>
            <span className="flex items-center justify-center gap-[2.500px]">同比 <Sort on /></span>
            <span className="flex items-center justify-center gap-[2.500px]">环比 <Sort /></span>
          </div>
          {STATS.map((s, i) => (
            <div key={i} className={cols + " h-[10px] border-b border-[#f5f5f5] text-center text-[#666]"}>
              <span className={linked ? "text-[#2f93cf] underline" : ""}>{names[i]}</span>
              <span>{s[0]}</span>
              <span className="flex items-center justify-center gap-[2px]">{s[1]} <Arrow up={s[2]} /></span>
              <span className="flex items-center justify-center gap-[2px]">{s[3]} <Arrow up={s[4]} /></span>
            </div>
          ))}
          <div className="-ml-[0.500px] pt-[3.700px]">
            <Pager />
          </div>
        </section>
      </div>
      <i className="-ml-[4px] mt-[2.700px] h-[79px] w-[2.600px] shrink-0 rounded-full bg-[#8a8a8a]" />
    </aside>
  );
}

function Screen({ map, sidebar, trend, dark, overlay, children }) {
  return (
    <div className="relative h-[256px] w-[480px] shadow-[0_6px_14px_rgba(0,0,0,0.11)]">
      <div className="flex h-full w-full flex-col overflow-hidden">
        <Header />
        <div className="flex h-[236px]">
          <div className="relative h-[236px] w-[333px] shrink-0">
            {map}
            <Thumbs trend={trend} />
            {children}
          </div>
          {sidebar}
        </div>
      </div>
      {dark && (
        <div className="absolute inset-0 flex flex-col">
          <div className="h-[20px] bg-black/40" />
          <div className="grow bg-black/60" />
        </div>
      )}
      {overlay}
    </div>
  );
}

/* ---------- modal pieces ---------- */

function Check({ on, children }) {
  return (
    <span className={on ? "flex items-center gap-[1.800px] whitespace-nowrap text-[#2b95d3]" : "flex items-center gap-[1.800px] whitespace-nowrap text-[#777]"}>
      <svg viewBox="0 0 14 14" className="h-[4.900px] w-[4.900px] shrink-0">
        <rect x=".7" y=".7" width="12.600" height="12.600" fill="#fff" stroke={on ? "#3fa3dd" : "#d9d9d9"} strokeWidth="1.200" />
        {on && <path d="M3.500 7l2.700 3L11 4.500" fill="none" stroke="#2b95d3" strokeWidth="1.400" />}
      </svg>
      {children}
    </span>
  );
}

function Segments({ items, active, item }) {
  return (
    <div className="flex text-[4.200px] text-[#666]">
      {items.map((t, i) => (
        <span
          key={t}
          className={(i === active ? "bg-[#0b8fd8] text-white " : "border border-[#f3f3f3] ") + "flex items-center justify-center whitespace-nowrap " + item}
        >
          {t}
        </span>
      ))}
    </div>
  );
}

function Legend({ items, y }) {
  return (
    <g fontSize="11.700" fill="#888">
      {items.map(([x, text, color, kind]) => (
        <g key={x}>
          {kind === "line" && <path d={`M${x - 9} ${y}h18`} stroke={color} strokeWidth="2" />}
          {kind === "box" ? <rect x={x - 4} y={y - 4} width="8" height="8" fill={color} /> : <circle cx={x} cy={y} r="4" fill={color} />}
          <text x={x + (kind === "line" ? 14 : 11)} y={y + 4}>{text}</text>
        </g>
      ))}
    </g>
  );
}

function Marks({ green, red }) {
  return (
    <g>
      {green.map((p) => (
        <circle key={p[0]} cx={p[0]} cy={p[1]} r="6" fill="#a0dc78" />
      ))}
      {red.map((p) => (
        <circle key={p[0]} cx={p[0]} cy={p[1]} r={p[2]} fill="#ef7184" />
      ))}
    </g>
  );
}

function Tip({ x, y }) {
  return (
    <g fontSize="11.300" fill="#e8e8e8">
      <rect x={x} y={y} width="140" height="109" rx="2" fill="#1d1d1d" fillOpacity="0.92" />
      <text x={x + 14} y={y + 22}>2017/07</text>
      {[["地价指数:", "309", "#1f8fd0"], ["楼价指数:", "327", "#7fcf3a"], ["舆论指数:", "318", "#f3dc2e"]].map((r, i) => (
        <g key={i} fontWeight="500">
          <circle cx={x + 17} cy={y + 43 + i * 22} r="2.700" fill={r[2]} />
          <text x={x + 25} y={y + 46 + i * 22}>{r[0]}</text>
          <text x={x + 84} y={y + 46 + i * 22}>{r[1]}</text>
        </g>
      ))}
    </g>
  );
}

function CompareModal() {
  const dates = ["2015/07", "2015/10", "2016/01", "2016/04", "2016/07", "2016/10", "2017/01", "2017/04", "2017/07", "2017/10", "2018/01", "2018/04", "2018/07"];
  return (
    <div className="absolute left-[70px] top-[45px] flex h-[166px] w-[340px] flex-col bg-white shadow-lg">
      <div className="flex h-[17.700px] items-center justify-center pt-[2.500px] text-[5.300px] font-medium text-[#333]">指数间对比趋势图</div>
      <div className="grid h-[27.300px] grid-cols-[48px_49.300px_48.300px_48.700px_48.700px_40px] grid-rows-[10.700px_10.700px] content-center bg-[#f4f4f4] pl-[24.700px] text-[4px]">
        <Check on>地价指数</Check>
        <Check>拿地情绪指数</Check>
        <Check>供地指数</Check>
        <Check>同比环比指数</Check>
        <Check on>楼价指数</Check>
        <Check>楼盘类指标二</Check>
        <Check>楼盘类指标三</Check>
        <Check on>舆情指数</Check>
        <Check>宏观类指数二</Check>
      </div>
      <div className="flex h-[18px] justify-center pt-[5.700px]">
        <Segments items={["最近1年", "最近3年", "最近5年"]} active={1} item="h-[9px] w-[28px]" />
      </div>
      <svg viewBox="240 480 1020 309" className="block h-[103px] w-[340px]" fontFamily={F}>
        <Legend
          y={496}
          items={[[480, "地价指数", "#1f8fd0", "line"], [609, "楼价指数", "#7ccb3a", "line"], [731, "舆情指数", "#f2dc3a", "line"], [859, "利好政策", "#7ccb3a"], [992, "利差政策", "#c9102f"]]}
        />
        <Grid x1={321} x2={1198} y1={537} y2={712} sx={22.5} sy={17.5} />
        <path d="M321 522V712H1198" fill="none" stroke="#9a9a9a" strokeWidth="2" />
        <circle cx="321" cy="523" r="3.500" fill="#444" />
        <g fontSize="12" fill="#999" textAnchor="end">
          {[500, 400, 300, 200, 100, 0].map((v, i) => (
            <text key={v} x="314" y={541 + i * 35}>{v}</text>
          ))}
        </g>
        <g fill="none" strokeWidth="2.200">
          <path d="M331 622C360 640 390 641 420 637C470 631 500 622 550 622C610 622 640 640 688 640C730 637 755 632 775 630C830 615 840 600 893 597C930 596 960 601 1020 602C1080 603 1120 588 1180 582" stroke="#1f8fd0" />
          <path d="M331 625C360 645 390 650 420 646C470 636 500 625 550 625C610 625 640 647 688 647C740 644 765 640 790 632C835 610 850 592 893 585C940 580 980 592 1040 595C1090 594 1130 580 1180 570" stroke="#f0dc55" />
          <path d="M331 627C360 655 385 664 415 661C470 652 500 630 550 630C620 632 645 664 690 662C740 657 760 650 775 648C830 620 850 595 893 583C930 568 960 576 1010 588C1080 596 1130 567 1180 555" stroke="#80ca3f" />
        </g>
        <Marks
          green={[[374, 604], [436, 579], [539, 579], [773, 575], [795, 583]]}
          red={[[341, 649, 6], [457, 663, 8], [593, 693, 6]]}
        />
        <path d="M896 536V712" stroke="#f9b233" strokeWidth="2" />
        <path d="M891 534h10l-5 6zM891 714h10l-5-6z" fill="#f5a623" />
        <rect x="892" y="581" width="8" height="8" fill="#6fbf2a" />
        <rect x="892" y="594" width="8" height="7" fill="#1f8fd0" />
        <Tip x={903} y={588} />
        <circle cx="1008" cy="679" r="7" fill="#4a1620" />
        <g fontSize="12" fill="#888" textAnchor="middle">
          {dates.map((d, i) => (
            <text key={d} x={345 + i * 68.4} y="732">{d}</text>
          ))}
        </g>
      </svg>
    </div>
  );
}

function Palette() {
  return (
    <div className="absolute left-[428px] top-[134px] flex h-[78.300px] w-[23.300px] flex-col items-center justify-center gap-[3.100px] bg-[#141414]">
      <i className="h-[4.300px] w-[4.300px] rounded-full bg-[#1f8fe0]" />
      <i className="h-[4.300px] w-[4.300px] rounded-full bg-[#7fd03a]" />
      <i className="h-[4.300px] w-[4.300px] rounded-full bg-[#f7e52e]" />
      <i className="h-[4.300px] w-[4.300px] rounded-full bg-[#b52ad6]" />
      <i className="h-[4.300px] w-[4.300px] rounded-full bg-[#4fdcc0]" />
      <i className="h-[4.300px] w-[4.300px] rounded-full bg-[#f5a623]" />
      <i className="h-[4.300px] w-[4.300px] rounded-full bg-[#8a22ee]" />
      <i className="h-[4.300px] w-[4.300px] rounded-full bg-[#5ba21e]" />
      <i className="h-[4.300px] w-[4.300px] rounded-full bg-[#d5d5d5]" />
    </div>
  );
}

const BARS = [575, 595, 585, 570, 562, 521, 584, 604, 575, 570, 545, 548, 565, 591, 565, 575, 575, 545, 585, 625, 555, 565, 574, 604, 582, 585, 574, 565, 595, 556, 565, 545, 574, 595, 615];
const SHORT_DATES = ["15/07", "15/11", "16/01", "16/04", "16/07", "16/10", "17/01", "17/04", "17/07", "17/10", "18/01", "18/04"];
const DATE_X = [441, 497, 558, 614, 672, 726, 787, 843, 899, 955, 1014, 1070];

function DoubleModal() {
  return (
    <div className="absolute left-[97px] top-[34px] flex h-[184px] w-[287px] flex-col bg-white shadow-lg">
      <div className="mx-[5px] flex h-[18px] items-center border-b border-[#f3f3f3] pl-[1.300px] pt-[1px] text-[5.300px] text-[#333]">
        <span className="font-medium">指数间对比趋势图</span>
        <div className="ml-auto flex gap-[7.300px]">
          <Segments items={["最近1年", "最近3年", "最近5年"]} active={1} item="h-[8.300px] w-[26.800px]" />
          <Segments items={["月", "季", "年"]} active={0} item="h-[8.300px] w-[16.900px]" />
        </div>
        <svg viewBox="0 0 10 10" className="ml-[6.500px] mr-[3px] h-[2.800px] w-[2.800px]" stroke="#777" strokeWidth="1.500">
          <path d="M0 0L10 10M10 0L0 10" />
        </svg>
      </div>
      <svg viewBox="321 186 861 208" className="block h-[69.300px] w-[287px]" fontFamily={F}>
        <Legend
          y={211}
          items={[[520, "利好政策", "#7ccb3a"], [613, "利空政策", "#c9102f"], [719, "地价指数", "#1f8fd0", "line"], [820, "楼价指数", "#7ccb3a", "line"], [921, "舆情指数", "#f2dc3a", "line"]]}
        />
        <Grid x1={423} x2={1098} y1={241} y2={352} sx={19} sy={12} />
        <path d="M423 234V352H1104" fill="none" stroke="#888" strokeWidth="2" />
        <circle cx="423" cy="234" r="3.500" fill="#444" />
        <g fontSize="12" fill="#888" textAnchor="end">
          {[300, 200, 100, 0].map((v, i) => (
            <text key={v} x="415" y={251 + i * 35}>{v}</text>
          ))}
        </g>
        <g fill="none" strokeWidth="2">
          <path d="M434 299C470 310 520 307 560 302C620 296 640 300 690 307C750 308 790 295 830 291C880 282 910 285 954 287L1020 288" stroke="#4aa3d8" />
          <path d="M434 301C470 318 520 316 560 308C620 302 640 305 690 313C750 312 790 300 830 292C880 275 910 275 954 280L1020 285" stroke="#efe08a" />
          <path d="M434 299C460 325 485 332 510 328C560 320 590 303 630 307C670 312 690 332 720 330C770 325 800 310 830 290C860 268 890 263 915 267L954 273L1020 281L1098 253" stroke="#93cc62" />
        </g>
        <Marks green={[[476, 286], [538, 260], [641, 260], [875, 257], [897, 265]]} red={[[443, 310, 6], [559, 323, 8], [695, 334, 6]]} />
        <path d="M954 243V352" stroke="#f9b233" strokeWidth="2.500" />
        <path d="M949 240h10l-5 6zM949 354h10l-5-6z" fill="#f5a623" />
        <rect x="950" y="269" width="8" height="7" fill="#6fbf2a" />
        <rect x="950" y="283" width="8" height="7" fill="#1f8fd0" />
        <g fontSize="12" fill="#888" textAnchor="middle">
          {SHORT_DATES.map((d, i) => (
            <text key={d} x={DATE_X[i]} y="373">{d}</text>
          ))}
        </g>
        <Tip x={961} y={260} />
      </svg>
      <div className="flex h-[23.700px] items-center bg-[#f4f4f4] text-[3.900px]">
        <div className="flex w-[35px] shrink-0 flex-col border-r border-[#e9e9e9] pl-[11.700px] leading-[6.500px] text-[#888]">
          <span className="flex items-center whitespace-nowrap text-[#1f93d2]">
            土地类指数
            <i className="ml-auto h-[3.500px] w-[0.900px] bg-[#1f93d2]" />
          </span>
          <span className="whitespace-nowrap">楼盘类指数</span>
          <span className="whitespace-nowrap">宏观类指数</span>
        </div>
        <div className="grid grid-cols-[52px_53px_44.300px_45px_30px] grid-rows-[9px_9px] items-center pb-[2px] pl-[10.300px] text-[4px]">
          <Check on>楼盘购买情绪指数</Check>
          <Check>低价同比环比指数</Check>
          <Check>成交地价指数</Check>
          <Check>政府供地指数</Check>
          <Check>政府供地指数</Check>
          <Check>企业拿地情绪指数</Check>
          <Check on>楼价同比环比指数</Check>
          <Check>同比环比综合</Check>
        </div>
      </div>
      <svg viewBox="321 465 861 219" className="block h-[73px] w-[287px]" fontFamily={F}>
        <path d="M735 465H787L780 476Q779 478 775 478H747Q743 478 742 476Z" fill="#efefef" />
        <path d="M754 470h14M754 473h14" stroke="#aaa" strokeWidth="1.300" />
        <Legend
          y={493}
          items={[[573, "利好政策", "#7ccb3a"], [666, "利空政策", "#c9102f"], [773, "地价指数", "#1f8fd0", "line"], [872, "楼盘面积", "#ccc", "box"]]}
        />
        <Grid x1={412} x2={1096} y1={521} y2={631} sx={19} sy={12} />
        {BARS.map((t, i) => (
          <rect key={i} x={426 + i * 19.05} y={t} width="12" height={631 - t} fill="#d3d3d3" />
        ))}
        <path d="M412 514V631H1096" fill="none" stroke="#888" strokeWidth="2" />
        <circle cx="412" cy="514" r="3.500" fill="#444" />
        <path d="M1093 521V631" stroke="#ccc" strokeWidth="1.500" />
        <g fontSize="12" fill="#888">
          {[300, 200, 100, 0].map((v, i) => (
            <g key={v}>
              <text x="405" y={530 + i * 35} textAnchor="end">{v}</text>
              <text x="1104" y={532 + i * 35}>{v}</text>
            </g>
          ))}
        </g>
        <path d="M424 571C460 583 510 579 550 574C610 568 640 572 690 580C750 581 790 567 830 563C880 553 920 557 960 562C1020 562 1050 552 1088 551" fill="none" stroke="#3c9bd6" strokeWidth="2.400" />
        <Marks
          green={[[466, 565], [528, 538], [631, 538], [865, 536], [887, 543]]}
          red={[[433, 590, 6], [549, 602, 8], [684, 613, 6], [957, 577, 6], [1009, 598, 8]]}
        />
        <g fontSize="12" fill="#888" textAnchor="middle">
          {SHORT_DATES.map((d, i) => (
            <text key={d} x={DATE_X[i] - 10} y="652">{d}</text>
          ))}
        </g>
      </svg>
    </div>
  );
}

const DETAIL = [
  ["深圳", ...STATS[0], "28", "30", "107.14%", "0.00%"],
  ["东莞", ...STATS[1], "3", "4", "133.33%", "3.13%"],
  ["中山", ...STATS[2], "2", "5", "250.00%", "17.50%"],
  ["佛山", ...STATS[3], "3", "22", "166.67%", "0.00%"],
  ["惠州", ...STATS[4], "12", "31", "183.33%", "18.75%"],
  ["东莞", ...STATS[1], "11", "14", "281.82%", "11.11%"],
  ["中山", ...STATS[2], "8", "9", "177.25%", "17.25%"],
  ["佛山", ...STATS[3], "2", "3", "183.67%", "13.67%"],
  ["惠州", ...STATS[4], "4", "7", "174.15%", "14.15%"],
];

function Policy({ good, line, children }) {
  return (
    <span className="flex items-center gap-[1.400px] whitespace-nowrap leading-[6.600px]">
      <i className={good ? "h-[2.800px] w-[2.800px] shrink-0 rounded-full bg-[#84c92c]" : "h-[2.800px] w-[2.800px] shrink-0 rounded-full bg-[#c9102f]"} />
      <span className={line ? "underline" : ""}>{children}</span>
    </span>
  );
}

function DetailModal() {
  const cols = "grid grid-cols-[24.300px_26.700px_31.700px_30.700px_22.700px_22.700px_30px_29px_109px] items-center text-center";
  return (
    <div className="absolute left-[69.700px] top-[45px] flex h-[166px] w-[340.500px] flex-col bg-white shadow-lg">
      <div className="mx-[8px] flex h-[17.500px] items-center justify-center border-b border-[#f3f3f3] pt-[2.500px] text-[5.300px] font-medium text-[#333]">区域地价指数详情</div>
      <div className="mt-[7.500px] flex px-[8px] text-[4px] text-[#555]">
        <div className="h-[120px] w-[326.800px] shrink-0 overflow-hidden">
          <div className={cols + " h-[11.700px] bg-[#f4f4f4] font-medium text-[#555]"}>
            <span>城市</span>
            <span>地价指数</span>
            <span className="flex items-center justify-center gap-[2.500px]">同比 <Sort on /></span>
            <span className="flex items-center justify-center gap-[2.500px]">环比 <Sort /></span>
            <span>成交量</span>
            <span>供应量</span>
            <span>供需比</span>
            <span>流拍率</span>
            <span>政策数据</span>
          </div>
          {DETAIL.map((r, i) => (
            <div key={i} className={cols + (i === 4 ? " h-[18.200px]" : " h-[12.050px]") + " border-b border-[#f4f4f4]"}>
              <span>{r[0]}</span>
              <span>{r[1]}</span>
              <span className="flex items-center justify-center gap-[2px]">{r[2]} <Arrow up={r[3]} /></span>
              <span className="flex items-center justify-center gap-[2px]">{r[4]} <Arrow up={r[5]} /></span>
              <span>{r[6]}</span>
              <span>{r[7]}</span>
              <span>{r[8]}</span>
              <span>{r[9]}</span>
              <span className="flex flex-col pl-[1.500px] text-left">
                {i === 0 && <Policy good>坚持“房住不炒”，保持政策的连续性和稳定性</Policy>}
                {i === 4 && <Policy>总方针不变，严控高杠杆房企和投资投机性住...</Policy>}
                {i === 4 && <Policy good line>稳步推进目前正在抓紧完善法律草案</Policy>}
              </span>
            </div>
          ))}
        </div>
        <i className="ml-[1.500px] mt-[13.300px] h-[79.500px] w-[2.600px] shrink-0 rounded-full bg-[#8a8a8a]" />
      </div>
      <div className="px-[8px] pt-[5.300px]">
        <Pager wide />
      </div>
    </div>
  );
}

/* ---------- overlays for the province screen ---------- */

function Timeline() {
  return (
    <>
      <div className="absolute left-[119px] top-[199.300px] flex h-[14.500px] w-[35.300px] items-center justify-center rounded-[1px] bg-[#2b2b2b] text-[5.300px] text-white">
        2017/09
        <i className="absolute -bottom-[1.500px] left-[16px] h-[3.500px] w-[3.500px] rotate-45 bg-[#2b2b2b]" />
      </div>
      <div className="absolute left-[120px] top-[216.300px] flex h-[12.700px] w-[206px] items-center bg-white px-[5px] text-[4px] shadow">
        <svg viewBox="0 0 8 10" className="h-[3.600px] w-[3px]" fill="#1f8fd0">
          <path d="M0 0L8 5L0 10Z" />
        </svg>
        <i className="ml-[2px] h-[0.500px] w-[6px] bg-[#ddd]" />
        <i className="h-[6px] w-[6px] rounded-full bg-white shadow-[0_0_2px_rgba(0,0,0,0.35)]" />
        <i className="mr-[2px] h-[0.500px] grow bg-[#ddd]" />
        <svg viewBox="0 0 8 10" className="h-[3.600px] w-[3px]" fill="#1f8fd0">
          <path d="M8 0L0 5L8 10Z" />
        </svg>
        <span className="ml-[5.500px] whitespace-nowrap text-[#999]">上一月</span>
        <i className="mx-[2.500px] h-[4px] w-[0.500px] bg-[#eee]" />
        <span className="whitespace-nowrap text-[#2b95d3]">下一月</span>
      </div>
    </>
  );
}

function Note() {
  const row = "block whitespace-nowrap text-justify [text-align-last:justify]";
  return (
    <div className="absolute left-[324px] top-[105.300px] flex h-[31.700px] w-[110px] flex-col justify-center bg-white px-[6.700px] text-[3.900px] leading-[5.600px] text-[#444] shadow-[0_1px_4px_rgba(0,0,0,0.3)]">
      <span className={row}>国家对协议出让国有建设用地使用权采取最低限价。按</span>
      <span className={row}>照《中华人民共和国城市房地产管理法》第12条的规</span>
      <span className={row}>定，采取双方协议方式出让国有建设用地使用权的出让</span>
      <span className="flex justify-between whitespace-nowrap">
        金不得低于按国家规定所确定的最低价。
        <span className="text-[#cf1433] underline">查看更多</span>
      </span>
    </div>
  );
}

const NATIONAL = ["深圳", "东莞", "中山", "佛山", "惠州"];
const FOSHAN_NAMES = ["顺德", "三水", "南海", "禅城", "高明"];

function Intro() {
  const full = "block whitespace-nowrap [text-align-last:justify]";
  return (
    <aside className="flex h-full w-[491px] shrink-0 flex-col bg-white pl-[66.300px]">
      <p className="mt-[63px] pl-[1.500px] font-['Liberation_Sans',sans-serif] text-[16px] leading-[20px] tracking-[0.050px] text-[#8b8b8b]">UI Design - Project</p>
      <p className="mt-[8px] pl-[0.500px] font-['Liberation_Sans',sans-serif] text-[17px] leading-[20px] text-[#9a9a9a]">+</p>
      <h1 className="mt-[11px] text-[19.900px] font-bold leading-[30px] text-black">时代地产舆情</h1>
      <div className="mt-[12.500px] w-[359.500px] text-[14px] font-light leading-[21px] text-[#808080]">
        <span className="block">客户方：时代地产</span>
        <span className="block">行业：房地产</span>
        <span className={full}>项目内容：通过数据采集、数据建模、和数据可视化手</span>
        <span className={full}>段，为时代中国的项目投资分析和投资项目管理提供支</span>
        <span className={full}>撑，实现投资和管理的智能化、流程化和网络化。数据平</span>
        <span className="block">台，实现企业经营数据管理，支持企业经营决策。</span>
        <span className="block">时间：14天</span>
      </div>
      <i className="ml-[1px] mt-[18px] h-px w-[11px] bg-[#a5a5a5]" />
      <div className="mt-auto flex gap-[8px] pl-[13.700px]">
        <i className="h-4 w-4 rounded-full bg-[#6e8ff0]" />
        <i className="h-4 w-4 rounded-full bg-[#030b28]" />
      </div>
      <p className="mb-[39px] mt-[15px] pl-[13.700px] font-['Liberation_Sans',sans-serif] text-[14.500px] leading-[20px] tracking-[0.050px] text-[#6e6e6e]">UI/UX Personal Portfolio</p>
    </aside>
  );
}

export default function App() {
  const nation = <Sidebar title="当前区域地价指数-全国" names={NATIONAL} linked more />;
  return (
    <div className="flex h-[1020px] w-[1814px] overflow-hidden bg-[#f6f6f6] font-['Inter','Noto_Sans_CJK_SC',sans-serif]">
      <Intro />
      <main className="flex gap-[120px] pl-[109px] pt-[84px]">
        <section className="flex flex-col">
          <h2 className="h-[48px] font-['Liberation_Sans','Noto_Sans_CJK_SC',sans-serif] text-[14px] font-light leading-[20px] text-[#777]">全国&gt;广州&gt;佛山</h2>
          <div className="flex flex-col gap-[32px]">
            <Screen map={<ChinaMap />} sidebar={<Sidebar title="当前区域地价指数-全国" names={NATIONAL} linked underline />} />
            <Screen
              map={<GuangdongMap />}
              trend
              sidebar={<Sidebar title="当前区域地价指数-全国" names={NATIONAL} linked bigDot />}
              overlay={<Note />}
            >
              <Timeline />
            </Screen>
            <Screen
              map={<FoshanMap />}
              sidebar={
                <Sidebar
                  title={<span><span className="text-[#1f93d2]">全国&gt;</span>广东</span>}
                  province="广东"
                  city="佛山"
                  names={FOSHAN_NAMES}
                />
              }
            />
          </div>
        </section>
        <section className="flex flex-col">
          <h2 className="h-[48px] font-['Liberation_Sans','Noto_Sans_CJK_SC',sans-serif] text-[14.150px] font-light leading-[20px] text-[#777]">指数趋势地图、对比趋势地图、区域地价指数详情</h2>
          <div className="flex flex-col gap-[32px]">
            <Screen
              map={<ChinaMap />}
              sidebar={nation}
              dark
              overlay={
                <>
                  <CompareModal />
                  <Palette />
                </>
              }
            />
            <Screen map={<ChinaMap />} sidebar={nation} dark overlay={<DoubleModal />} />
            <Screen map={<ChinaMap />} sidebar={nation} dark overlay={<DetailModal />} />
          </div>
        </section>
        <div className="-ml-[69px] flex items-end pb-[37px]">
          <span className="font-['Noto_Sans',sans-serif] text-[13px] leading-[20px] text-[#8b8b8b]">17</span>
        </div>
      </main>
    </div>
  );
}
